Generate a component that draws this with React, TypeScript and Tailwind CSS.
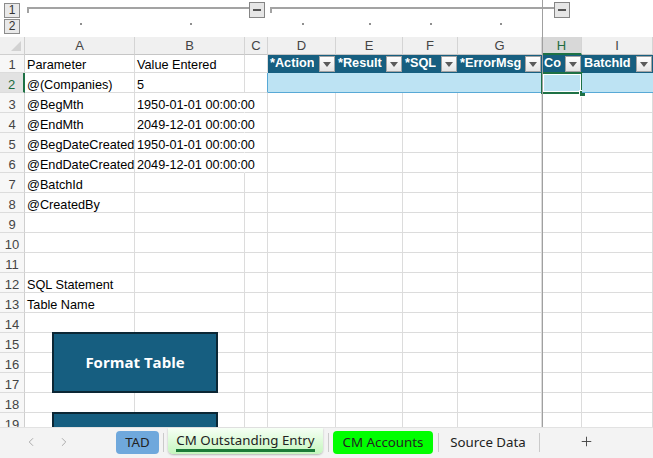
import { ChevronLeft, ChevronRight, Plus } from 'lucide-react';

const cols = ['A', 'B', 'C', 'D', 'E', 'F', 'G', 'H', 'I'];
const tableCols = ['D', 'E', 'F', 'G', 'H', 'I'];

const headers: Record<string, string> = {
  D: '*Action',
  E: '*Result',
  F: '*SQL',
  G: '*ErrorMsg',
  H: 'Co',
  I: 'BatchId',
};

const values: Record<number, [string, string]> = {
  1: ['Parameter', 'Value Entered'],
  2: ['@(Companies)', '5'],
  3: ['@BegMth', '1950-01-01 00:00:00'],
  4: ['@EndMth', '2049-12-01 00:00:00'],
  5: ['@BegDateCreated', '1950-01-01 00:00:00'],
  6: ['@EndDateCreated', '2049-12-01 00:00:00'],
  7: ['@BatchId', ''],
  8: ['@CreatedBy', ''],
  12: ['SQL Statement', ''],
  13: ['Table Name', ''],
};

const rows = Array.from({ length: 19 }, (_, i) => i + 1);

function FilterButton() {
  return (
    <div className="w-[16px] h-[16px] shrink-0 mr-[1px] border border-[#a3a3a3] bg-gradient-to-b from-white to-[#e4e4e4] flex items-center justify-center">
      <svg width="8" height="5" viewBox="0 0 8 5">
        <polygon points="0,0 8,0 4,5" fill="#5a5a5a" />
      </svg>
    </div>
  );
}

function OutlineBar() {
  const dots = [81, 191, 303, 370, 431, 501];
  return (
    <div className="h-[37px] flex bg-white">
      <div className="w-[25px] flex flex-col items-start pl-[4px] pt-[3px] gap-px">
        {['1', '2'].map((n) => (
          <div
            key={n}
            className="w-[16px] h-[15px] border border-[#8c8c8c] bg-[#e9e9e9] text-[#333] text-[12px] leading-[13px] flex items-center justify-center"
          >
            {n}
          </div>
        ))}
      </div>
      <svg width="628" height="37" viewBox="25 0 628 37">
        <path d="M28 13 V8 H249" fill="none" stroke="#a3a3a3" strokeWidth="2" />
        <rect x="249.5" y="2.5" width="15" height="15" fill="#e6e6e6" stroke="#858585" />
        <rect x="253" y="9" width="8" height="2" fill="#555" />
        <path d="M271 13 V8 H554" fill="none" stroke="#a3a3a3" strokeWidth="2" />
        <rect x="554.5" y="2.5" width="15" height="15" fill="#e6e6e6" stroke="#858585" />
        <rect x="558" y="9" width="8" height="2" fill="#555" />
        {dots.map((x) => (
          <rect key={x} x={x - 1} y="23" width="2" height="2" fill="#8f8f8f" />
        ))}
      </svg>
    </div>
  );
}

function Sheet() {
  return (
    <div className="relative h-[390px] overflow-hidden bg-white">
      <div className="grid grid-cols-[25px_110px_110px_23px_68px_67px_55px_84px_40px_71px] text-[12.7px] text-black">
        {/* column letters */}
        <div className="h-[18px] bg-[#f0f0f0] border-r border-b border-[#cfcfcf] relative">
          <svg className="absolute right-[3px] bottom-[3px]" width="10" height="10" viewBox="0 0 10 10">
            <polygon points="10,0 10,10 0,10" fill="#d2d2d2" />
          </svg>
        </div>
        {cols.map((c) => (
          <div
            key={c}
            className={
              c === 'H'
                ? 'h-[18px] pt-px bg-[#d8d8d8] border-r border-[#d4d4d4] border-b-2 border-b-[#1e7145] text-[#1d6b40] text-[13px] flex items-center justify-center'
                : 'h-[18px] pt-px bg-[#f0f0f0] border-r border-b border-[#d4d4d4] border-b-[#c6c6c6] text-[#444] text-[13px] flex items-center justify-center'
            }
          >
            {c}
          </div>
        ))}

        {rows.map((r) => {
          const h = r === 1 ? 'h-[18px]' : 'h-[20px]';
          const v = values[r] || ['', ''];
          return [
            <div
              key={`rh${r}`}
              className={
                r === 2
                  ? `${h} bg-[#e2e2e2] border-b border-[#dcdcdc] border-r-2 border-r-[#1e7145] text-[#1d6b40] text-[13px] leading-[14px] flex items-end justify-center`
                  : `${h} bg-[#f7f7f7] border-r border-b border-[#dcdcdc] border-r-[#cfcfcf] text-[#444] text-[13px] leading-[14px] flex items-end justify-center`
              }
            >
              {r}
            </div>,
            ...cols.map((c) => {
              const key = `${c}${r}`;
              if (r === 1 && tableCols.includes(c)) {
                return (
                  <div
                    key={key}
                    className={`${h} bg-[#175f80] text-white font-bold flex items-center justify-between overflow-hidden`}
                  >
                    <span className="pl-[2px] whitespace-nowrap overflow-hidden">{headers[c]}</span>
                    <FilterButton />
                  </div>
                );
              }
              if (r === 2 && tableCols.includes(c)) {
                return (
                  <div key={key} className={`${h} bg-[#bde3f3] border-b border-[#58a9d6] relative`}>
                    {c === 'H' && (
                      <div className="absolute -left-px -top-px w-[42px] h-[22px] border-2 border-[#1e7145]">
                        <div className="absolute inset-0 border border-white" />
                        <div className="absolute -right-[5px] -bottom-[5px] w-[7px] h-[7px] bg-[#1e7145] border border-white" />
                      </div>
                    )}
                  </div>
                );
              }
              const text = c === 'A' ? v[0] : c === 'B' ? v[1] : '';
              const overflowB = c === 'B' && text.length > 15;
              const cRight = c === 'C' && r === 2 ? 'border-r-[#58a9d6]' : '';
              return (
                <div
                  key={key}
                  className={`${h} border-r border-b border-[#dcdcdc] ${overflowB ? 'border-r-transparent' : ''} ${cRight} flex items-end pl-[2px] whitespace-nowrap leading-[13px]`}
                >
                  {text}
                </div>
              );
            }),
          ];
        })}
      </div>

      <button className="absolute left-[52px] top-[295px] w-[166px] h-[61px] bg-[#165e80] border-2 border-[#0c2735] text-white font-bold text-[15px] font-['Open_Sans',sans-serif] flex items-center justify-center">
        Format Table
      </button>
      <button className="absolute left-[52px] top-[375px] w-[166px] h-[61px] bg-[#165e80] border-2 border-[#0c2735]" />
    </div>
  );
}

function TabBar() {
  return (
    <div className="h-[31px] bg-[#f3f3f3] border-t border-[#e2e2e2] flex items-start text-[13.3px] text-[#222] whitespace-nowrap font-['Noto_Sans',sans-serif]">
      <div className="w-[116px] h-[27px] flex items-center pl-[24px] gap-[19px] text-[#a0a0a0]">
        <ChevronLeft size={14} strokeWidth={1.5} />
        <ChevronRight size={14} strokeWidth={1.5} />
      </div>
      <div className="mt-[3px] w-[43px] h-[23px] rounded-[4px] bg-[#6fa8dc] flex items-center justify-center">TAD</div>
      <div className="mt-[5px] ml-[4px] mr-[4px] w-px h-[19px] bg-[#cacaca]" />
      <div className="w-[155px] h-[26px] rounded-b-[5px] bg-gradient-to-b from-[#f6fff5] to-[#c4f6bd] shadow-[0_1px_2px_rgba(0,0,0,0.25)] flex items-start justify-center pt-[4px]">
        <span className="leading-[17px] border-b-[3px] border-[#1b7a38]">CM Outstanding Entry</span>
      </div>
      <div className="mt-[5px] ml-[5px] mr-[4px] w-px h-[19px] bg-[#cacaca]" />
      <div className="mt-[3px] w-[100px] h-[23px] rounded-[4px] bg-[#00ff00] flex items-center justify-center">CM Accounts</div>
      <div className="mt-[5px] ml-[5px] w-px h-[19px] bg-[#cacaca]" />
      <div className="mt-[3px] w-[98px] h-[23px] flex items-center justify-center">Source Data</div>
      <div className="mt-[5px] ml-[2px] w-px h-[19px] bg-[#cacaca]" />
      <div className="ml-[39px] h-[27px] flex items-center text-[#444]">
        <Plus size={15} strokeWidth={1.5} />
      </div>
    </div>
  );
}

export default function App() {
  return (
    <div className="relative w-[653px] h-[458px] overflow-hidden bg-white font-['Liberation_Sans',Arial,sans-serif]">
      <OutlineBar />
      <Sheet />
      <TabBar />
      {/* freeze pane divider */}
      <div className="absolute left-[542px] top-0 h-[427px] w-px bg-[#a0a0a0]" />
    </div>
  );
}
